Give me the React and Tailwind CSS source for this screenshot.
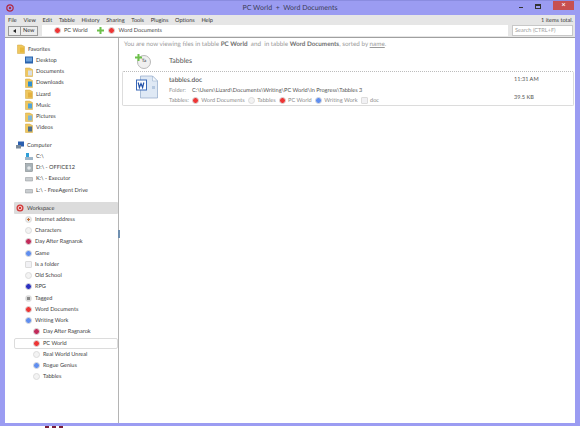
const font = "font-['Lato',sans-serif] [text-rendering:geometricPrecision]";

function Dot({ c, size = "w-[7px] h-[7px]" }) {
  return <span className={`${size} shrink-0 rounded-full border border-[#dcdcdc]`} style={{ background: c }} />;
}

function Folder({ accent = "#e8b93c" }) {
  return (
    <svg width="8" height="10" viewBox="0 0 8 10" className="shrink-0">
      <path d="M0.5 1h4l3 1.5v7h-7z" fill="#efc75e" stroke="#d0a53c" strokeWidth="0.5" />
      <rect x="3" y="3.5" width="4" height="5" fill={accent} />
    </svg>
  );
}

function Row({ icon, label, indent = "pl-[20px]" }) {
  return (
    <div className={`flex h-[11.25px] items-center gap-[3px] ${indent}`}>
      {icon}
      <span className="whitespace-nowrap text-[5.6px] leading-[7px] text-[#3a3a3a]">{label}</span>
    </div>
  );
}

function Drive({ c = "#c9cdd0" }) {
  return (
    <svg width="8" height="9" viewBox="0 0 8 9" className="shrink-0">
      <path d="M0.5 3.5h7v3.5h-7z" fill={c} stroke="#8d9194" strokeWidth="0.5" />
    </svg>
  );
}

const favs = [
  ["Desktop", <svg key="d" width="8" height="8" viewBox="0 0 8 8" className="shrink-0"><rect width="8" height="7" y="0.5" fill="#2a63ad" /><rect x="1" y="1.5" width="6" height="4" fill="#6aa0da" /></svg>],
  ["Documents", <Folder accent="#d9dee2" />],
  ["Downloads", <Folder accent="#2f8fd0" />],
  ["Lizard", <Folder accent="#e3b040" />],
  ["Music", <Folder accent="#4fa3d8" />],
  ["Pictures", <Folder accent="#7fb6d8" />],
  ["Videos", <Folder accent="#4d6f8d" />],
];

const tags = [
  ["Internet address", "radial-gradient(circle,#c0703a 35%,#e8e8e8 40%)"],
  ["Characters", "#f3f3f3"],
  ["Day After Ragnarok", "#c22a5a"],
  ["Game", "#5f8ef0"],
  ["Is a folder", "#f1f1f4", true],
  ["Old School", "#f3f3f3"],
  ["RPG", "#2a2fc0"],
  ["Tagged", "radial-gradient(circle,#888 40%,#ddd 45%)"],
  ["Word Documents", "#ee3535"],
  ["Writing Work", "#5f8ef0"],
];

const sub = [
  ["Day After Ragnarok", "#c22a5a"],
  ["PC World", "#ee3535", false, true],
  ["Real World Unreal", "#f3f3f3"],
  ["Rogue Genius", "#5f8ef0"],
  ["Tabbles", "#f3f3f3"],
];

const menus = ["File", "View", "Edit", "Tabble", "History", "Sharing", "Tools", "Plugins", "Options", "Help"];

function MiniTag({ c, label, square }) {
  return (
    <span className="flex items-center gap-[2.5px]">
      <span className={`h-[7px] w-[7px] border border-[#dcdcdc] ${square ? "rounded-[1px]" : "rounded-full"}`} style={{ background: c }} />
      <span>{label}</span>
    </span>
  );
}

export default function App() {
  return (
    <div className={`${font} flex h-[428px] w-[580px] flex-col overflow-hidden bg-white`}>
      <div className="flex h-[426px] shrink-0 flex-col border-t border-t-[#8a8ce0] bg-[#9b9cf2] px-[5px] pb-[3px]">
        {/* title bar */}
        <div className="relative flex h-[14px] shrink-0 items-center justify-center">
          <svg width="8" height="8" viewBox="0 0 8 8" className="absolute left-[1px] top-[3px]">
            <circle cx="4" cy="4" r="3.2" fill="none" stroke="#b02840" strokeWidth="1.2" />
            <circle cx="4" cy="4" r="1.2" fill="#b02840" />
          </svg>
          <span className="text-[7px] leading-[9px] text-[#3c3c58]">PC World&nbsp; +&nbsp; Word Documents</span>
          <div className="absolute right-[1px] top-0 flex items-start">
            <span className="mr-[12px] mt-[6px] h-px w-[4px] bg-[#333]" />
            <span className="mr-[12px] mt-[3px] h-[5px] w-[6px] border border-[#333] border-t-2" />
            <span className="flex h-[9px] w-[21px] items-center justify-center bg-[#c75050] text-[7px] font-bold leading-none text-white">×</span>
          </div>
        </div>
        {/* menu + toolbar */}
        <div className="shrink-0 bg-[#e6e6e6]">
          <div className="flex h-[9px] items-center justify-between pl-[3px] pr-[2px] pt-[2px] text-[5.6px] leading-[7px] text-[#333]">
            <div className="flex gap-[6.7px]">
              {menus.map((m) => <span key={m}>{m}</span>)}
            </div>
            <span>1 items total.</span>
          </div>
          <div className="flex h-[13px] items-center gap-[4px] pl-[3px] pr-[2px]">
            <div className="flex h-[10px] items-center border border-[#9a9a9a] bg-[#ececec] text-[5.6px] leading-[7px] text-[#333]">
              <span className="flex h-full w-[12px] items-center justify-center border-r border-[#9a9a9a]">
                <span className="h-0 w-0 border-y-[2.5px] border-r-[3px] border-y-transparent border-r-[#222]" />
              </span>
              <span className="px-[2px]">New</span>
            </div>
            <div className="flex h-[11px] flex-1 items-center bg-white pl-[12px] text-[5.6px] leading-[7px] text-[#454545]">
              <Dot c="#ee3535" />
              <span className="ml-[3.5px]">PC World</span>
              <svg width="7" height="7" viewBox="0 0 7 7" className="ml-[9px]"><path d="M2.5 0h2v2.5H7v2H4.5V7h-2V4.5H0v-2h2.5z" fill="#6cc04a" /></svg>
              <Dot c="#ee3535" size="w-[7px] h-[7px] ml-[4.5px]" />
              <span className="ml-[3.5px]">Word Documents</span>
            </div>
            <div className="flex h-[11px] w-[61px] items-center border border-[#c8c8c8] bg-white pl-[2px] text-[5.6px] leading-[7px] text-[#9a9a9a]">Search (CTRL+F)</div>
          </div>
          <div className="h-[1px] bg-[#a0a0a0]" />
        </div>
        {/* body */}
        <div className="flex min-h-0 flex-1 bg-white">
          <div className="relative flex w-[114px] shrink-0 flex-col border-r border-[#b4b4b4] pl-[9px] pt-[5.5px]">
            <span className="absolute right-[-2px] top-[192px] h-[8px] w-[2px] bg-[#6f8fb0]" />
            <Row label="Favorites" indent="pl-[3px]" icon={<Folder />} />
            {favs.map(([l, i]) => <Row key={l} label={l} icon={i} indent="pl-[11px]" />)}
            <div className="h-[6px]" />
            <Row label="Computer" indent="pl-[2px]" icon={<svg width="8" height="8" viewBox="0 0 8 8" className="shrink-0"><rect x="2" y="0.5" width="6" height="5" fill="#2a5fb0" /><rect x="0" y="4" width="5" height="3.5" fill="#7a8a9a" /></svg>} />
            <Row label="C:\" indent="pl-[11px]" icon={<svg width="8" height="9" viewBox="0 0 8 9" className="shrink-0"><rect y="5" width="8" height="3" fill="#9fb6c8" /><rect x="1" y="1" width="3" height="4" fill="#2f9fd8" /></svg>} />
            <Row label="D:\ - OFFICE12" indent="pl-[11px]" icon={<svg width="8" height="9" viewBox="0 0 8 9" className="shrink-0"><rect x="0.5" y="0.5" width="7" height="8" fill="#a9b3b8" stroke="#70787c" strokeWidth="0.5" /><circle cx="4" cy="5" r="1.8" fill="#e4e8ea" /></svg>} />
            <Row label="K:\ - Executor" indent="pl-[11px]" icon={<Drive />} />
            <Row label="L:\ - FreeAgent Drive" indent="pl-[11px]" icon={<Drive />} />
            <div className="h-[6.5px]" />
            <div className="flex h-[11.5px] items-center gap-[3px] rounded-[1px] bg-[#dcdcdc] pl-[2px]">
              <svg width="8" height="8" viewBox="0 0 8 8" className="shrink-0"><circle cx="4" cy="4" r="3.5" fill="#d23434" /><circle cx="4" cy="4" r="1.8" fill="none" stroke="#fff" strokeWidth="0.8" /></svg>
              <span className="text-[5.6px] leading-[7px] text-[#3a3a3a]">Workspace</span>
            </div>
            {tags.map(([l, c, sq]) => (
              <Row key={l} label={l} indent="pl-[11px]" icon={<span className={`h-[7px] w-[7px] shrink-0 border border-[#dcdcdc] ${sq ? "rounded-[1px]" : "rounded-full"}`} style={{ background: c }} />} />
            ))}
            {sub.map(([l, c, , sel]) => (
              <div key={l} className={`flex h-[11.25px] items-center gap-[3px] pl-[19px] ${sel ? "rounded-[2px] border border-[#dcdcdc]" : ""}`} style={sel ? { paddingLeft: 18 } : undefined}>
                <span className="h-[7px] w-[7px] shrink-0 rounded-full border border-[#dcdcdc]" style={{ background: c }} />
                <span className="whitespace-nowrap text-[5.6px] leading-[7px] text-[#3a3a3a]">{l}</span>
              </div>
            ))}
          </div>
          {/* main */}
          <div className="flex min-w-0 flex-1 flex-col pl-[3px] pr-[1px]">
            <div className="flex h-[14px] items-center whitespace-nowrap pl-[2px] text-[6.3px] leading-[8px] text-[#9a9a9a]">
              <span>You are now viewing files in tabble&nbsp;</span>
              <b className="font-bold text-[#707070]">PC World</b>
              <span>&nbsp; and &nbsp;in tabble&nbsp;</span>
              <b className="font-bold text-[#707070]">Word Documents</b>
              <span>, sorted by&nbsp;</span>
              <span className="underline">name</span>
              <span>.</span>
            </div>
            <div className="flex h-[19px] items-center pl-[15px]">
              <span className="relative flex h-[14px] w-[14px] items-center justify-center rounded-full border border-[#b9b9b9] bg-[#f0f0f0] text-[4.5px] font-bold leading-none text-[#666]">
                Ta
                <svg width="7" height="7" viewBox="0 0 7 7" className="absolute -left-[3px] -top-[2px]"><path d="M2.5 0h2v2.5H7v2H4.5V7h-2V4.5H0v-2h2.5z" fill="#6cc04a" /></svg>
              </span>
              <span className="ml-[18px] text-[7px] leading-[9px] text-[#555]">Tabbles</span>
            </div>
            <div className="flex h-[35px] rounded-[2px] border border-[#dcdcdc] border-t-[#bcbcbc] border-l-[#bcbcbc] pt-[3px]" style={{ borderTopStyle: "dotted", borderLeftStyle: "dotted" }}>
              <div className="flex w-[46px] shrink-0 justify-center pl-[3px]">
                <svg width="23" height="24" viewBox="0 0 23 24">
                  <path d="M4.5 1h12l5 5v17h-17z" fill="#dfe9f5" stroke="#8fa8c8" strokeWidth="0.7" />
                  <path d="M16.5 1v5h5z" fill="#f5f8fc" stroke="#8fa8c8" strokeWidth="0.5" />
                  <rect x="16" y="11" width="3" height="3" fill="#b5c8e0" />
                  <rect x="0.5" y="5" width="10" height="10" fill="#fff" stroke="#3868b8" strokeWidth="1" />
                  <path d="M2.2 7.5l1.2 5 1.6-4 1.6 4 1.2-5" fill="none" stroke="#2050a8" strokeWidth="1.2" />
                </svg>
              </div>
              <div className="flex min-w-0 flex-1 flex-col">
                <span className="h-[9px] pt-[1px] text-[6.6px] leading-[8px] text-[#444]">tabbles.doc</span>
                <div className="mt-[1.5px] flex h-[10px] items-center whitespace-nowrap text-[5.6px] leading-[7px]">
                  <span className="w-[23px] text-[#909090]">Folder:</span>
                  <span className="text-[#505050]">C:\Users\Lizard\Documents\Writing\PC World\In Progress\Tabbles 3</span>
                </div>
                <div className="flex h-[10px] items-center gap-[3px] whitespace-nowrap text-[5.6px] leading-[7px] text-[#8a8a8a]">
                  <span>Tabbles:</span>
                  <MiniTag c="#ee3535" label="Word Documents" />
                  <MiniTag c="#f3f3f3" label="Tabbles" />
                  <MiniTag c="#ee3535" label="PC World" />
                  <MiniTag c="#5f8ef0" label="Writing Work" />
                  <MiniTag c="#f1f1f4" label="doc" square />
                </div>
              </div>
              <div className="flex w-[59px] shrink-0 flex-col justify-between pb-[4px] text-[5.6px] leading-[7px] text-[#555]">
                <span className="pt-[1px]">11:31 AM</span>
                <span>39.5 KB</span>
              </div>
            </div>
          </div>
        </div>
      </div>
      <div className="flex flex-1 gap-[3px] bg-white pl-[45px]">
        <span className="h-[2px] w-[4px] bg-[#7a1f3a]" />
        <span className="h-[2px] w-[4px] bg-[#7a1f3a]" />
        <span className="h-[2px] w-[4px] bg-[#7a1f3a]" />
      </div>
    </div>
  );
}
